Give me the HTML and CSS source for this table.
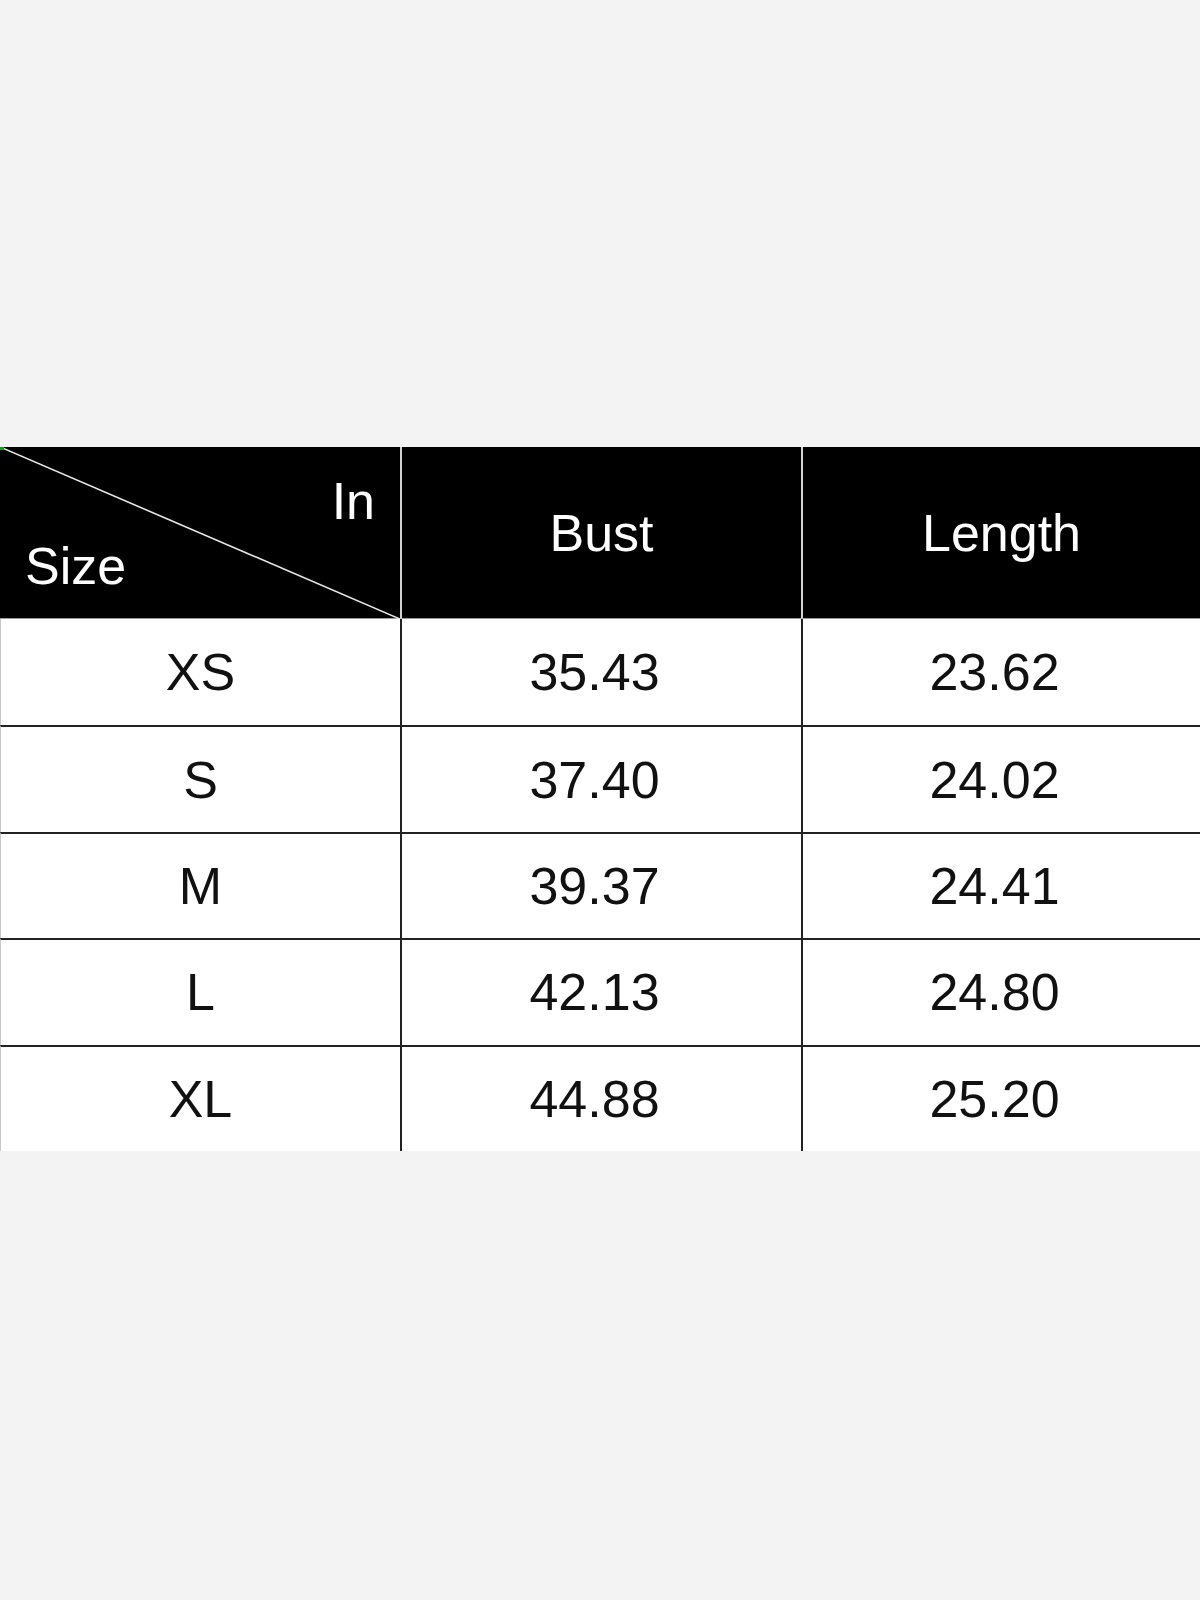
FILE: index.html
```html
<!DOCTYPE html>
<html>
<head>
<meta charset="utf-8">
<link rel="stylesheet" href="styles.css">
</head>
<body>
<div class="page">
  <div class="chart">
    <div class="hcell corner">
      <svg class="diag" viewBox="0 0 400 172" preserveAspectRatio="none"><line x1="0" y1="0" x2="400" y2="172" stroke="#e6e6e6" stroke-width="1.6"/></svg>
      <span class="unit">In</span>
      <span class="size">Size</span>
      <span class="dot"></span>
    </div>
    <div class="hcell sep">Bust</div>
    <div class="hcell sep">Length</div>

    <div class="cell first">XS</div><div class="cell num">35.43</div><div class="cell num">23.62</div>
    <div class="cell first line">S</div><div class="cell num line">37.40</div><div class="cell num line">24.02</div>
    <div class="cell first line">M</div><div class="cell num line">39.37</div><div class="cell num line">24.41</div>
    <div class="cell first line">L</div><div class="cell num line">42.13</div><div class="cell num line">24.80</div>
    <div class="cell first line">XL</div><div class="cell num line">44.88</div><div class="cell num line">25.20</div>
  </div>
</div>
</body>
</html>
```

FILE: styles.css
```css
html, body {
  margin: 0;
  padding: 0;
  background: #f3f3f3;
}
.page {
  width: 1200px;
  height: 1600px;
  padding-top: 447px;
  box-sizing: border-box;
  font-family: "Liberation Sans", Arial, sans-serif;
}
.chart {
  display: grid;
  grid-template-columns: 400px 401px 399px;
  grid-template-rows: 172px repeat(5, 106.4px);
  background: #fff;
}
.hcell {
  background: #000;
  color: #fff;
  font-size: 52px;
  line-height: 52px;
  display: flex;
  align-items: center;
  justify-content: center;
  border-bottom: 1px solid #9a9a9a;
  box-sizing: border-box;
}
.hcell.sep {
  border-left: 2px solid #d2d2d2;
}
.corner {
  position: relative;
  flex-direction: column;
  align-items: stretch;
  justify-content: space-between;
  padding: 28px 25px 26px 25px;
}
.diag {
  position: absolute;
  left: 0;
  top: 0;
  width: 400px;
  height: 172px;
}
.dot {
  position: absolute;
  left: 0;
  top: 0;
  width: 4px;
  height: 3px;
  background: #1c9a1c;
}
.unit {
  align-self: flex-end;
  position: relative;
}
.size {
  align-self: flex-start;
  position: relative;
}
.cell {
  font-size: 52px;
  color: #111;
  display: flex;
  align-items: center;
  justify-content: center;
  box-sizing: border-box;
  border-left: 2px solid #222;
}
.cell.first {
  border-left: 1px solid #c8c8c8;
}
.cell.num {
  padding-right: 14px;
}
.cell.line {
  border-top: 2px solid #222;
}
```
